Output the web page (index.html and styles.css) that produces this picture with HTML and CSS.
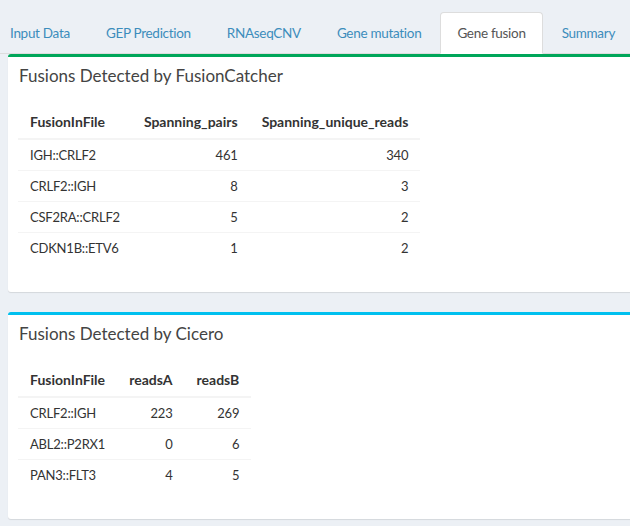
FILE: index.html
```html
<!DOCTYPE html>
<html>
<head>
<meta charset="utf-8">
<link rel="stylesheet" href="styles.css">
</head>
<body>
<div class="page">
  <ul class="tabs">
    <li class="tab"><a>Input Data</a></li>
    <li class="tab"><a>GEP Prediction</a></li>
    <li class="tab"><a>RNAseqCNV</a></li>
    <li class="tab"><a>Gene mutation</a></li>
    <li class="tab active"><a>Gene fusion</a></li>
    <li class="tab"><a>Summary</a></li>
  </ul>
  <div class="box box-success">
    <div class="box-header"><h3 class="box-title">Fusions Detected by FusionCatcher</h3></div>
    <div class="box-body">
      <table class="tbl">
        <thead>
          <tr><th class="l">FusionInFile</th><th class="r">Spanning_pairs</th><th class="r">Spanning_unique_reads</th></tr>
        </thead>
        <tbody>
          <tr><td class="l">IGH::CRLF2</td><td class="r">461</td><td class="r">340</td></tr>
          <tr><td class="l">CRLF2::IGH</td><td class="r">8</td><td class="r">3</td></tr>
          <tr><td class="l">CSF2RA::CRLF2</td><td class="r">5</td><td class="r">2</td></tr>
          <tr><td class="l">CDKN1B::ETV6</td><td class="r">1</td><td class="r">2</td></tr>
        </tbody>
      </table>
    </div>
  </div>
  <div class="box box-info">
    <div class="box-header"><h3 class="box-title">Fusions Detected by Cicero</h3></div>
    <div class="box-body">
      <table class="tbl">
        <thead>
          <tr><th class="l">FusionInFile</th><th class="r">readsA</th><th class="r">readsB</th></tr>
        </thead>
        <tbody>
          <tr><td class="l">CRLF2::IGH</td><td class="r">223</td><td class="r">269</td></tr>
          <tr><td class="l">ABL2::P2RX1</td><td class="r">0</td><td class="r">6</td></tr>
          <tr><td class="l">PAN3::FLT3</td><td class="r">4</td><td class="r">5</td></tr>
        </tbody>
      </table>
    </div>
  </div>
</div>
</body>
</html>
```

FILE: styles.css
```css
html, body {
  margin: 0;
  padding: 0;
  background: #ecf0f5;
  overflow: hidden;
  font-family: "Lato", "Open Sans", sans-serif;
  color: #333;
}
.page {
  width: 640px;
  padding-left: 8px;
}
.tabs {
  list-style: none;
  padding: 12px 0 0 0;
  display: flex;
  flex-wrap: nowrap;
  border-bottom: 1px solid #ddd;
  width: 660px;
  margin: 0 0 0 -8px;
}
.tab {
  flex: 0 0 auto;
  margin-right: 2px;
  margin-bottom: -1px;
  white-space: nowrap;
}
.tab:first-child {
  margin-left: -7px;
}
.tab a {
  display: block;
  padding: 10px 16px;
  line-height: 20px;
  font-size: 13.5px;
  letter-spacing: -0.3px;
  color: #3c8dbc;
  border: 1px solid transparent;
  border-radius: 4px 4px 0 0;
}
.tab.active a {
  background: #fff;
  color: #555;
  border-color: #ddd #ddd transparent #ddd;
}
.box {
  background: #fff;
  border-top: 3px solid #d2d6de;
  border-radius: 3px;
  box-shadow: 0 1px 1px rgba(0, 0, 0, 0.1);
  width: 640px;
  margin-bottom: 20px;
}
.box-success { border-top-color: #00a65a; }
.box-info { border-top-color: #00c0ef; }
.box-header {
  padding: 10px 11px;
}
.box-title {
  margin: 0;
  font-size: 17px;
  line-height: 18px;
  font-weight: 400;
  color: #444;
}
.box-body {
  padding: 10px;
}
.tbl {
  border-collapse: collapse;
  margin-bottom: 19px;
  font-size: 14px;
}
.tbl th {
  font-weight: 700;
  padding: 8px 12px 7px;
  line-height: 18px;
  border-bottom: 2px solid #f4f4f4;
}
.tbl td {
  padding: 6px 12px;
  line-height: 18px;
  font-size: 13px;
  letter-spacing: -0.2px;
  border-top: 1px solid #f4f4f4;
}
.tbl .l { text-align: left; }
.tbl .r { text-align: right; }
```
